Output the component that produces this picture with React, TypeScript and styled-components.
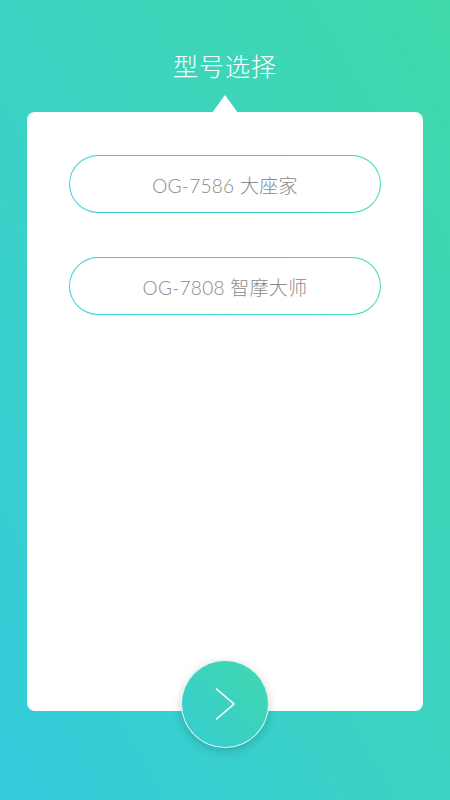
import React from 'react';
import styled, { createGlobalStyle } from 'styled-components';

const GlobalStyle = createGlobalStyle`
    html, body {
        margin: 0;
        padding: 0;
    }
    body {
        font-family: "Noto Sans", "Noto Sans CJK SC", sans-serif;
    }
`;

const Page = styled.div`
    box-sizing: border-box;
    width: 450px;
    height: 800px;
    padding: 48px 27px 0;
    background: linear-gradient(to top right, #33cbdc 0%, #3bd3c2 50%, #40d9aa 100%);
    display: flex;
    flex-direction: column;
    overflow: hidden;
`;

const Title = styled.h1`
    margin: 0 0 30px;
    font-family: "Noto Sans CJK SC", sans-serif;
    font-size: 25px;
    line-height: 34px;
    font-weight: 300;
    color: #ffffff;
    text-align: center;
    letter-spacing: 1px;
`;

const Card = styled.div`
    position: relative;
    box-sizing: border-box;
    height: 599px;
    background: #ffffff;
    border-radius: 8px;
    padding: 43px 42px 0;
    display: flex;
    flex-direction: column;
    gap: 44px;

    &::before {
        content: "";
        position: absolute;
        top: -17px;
        left: 50%;
        margin-left: -13px;
        border-left: 13px solid transparent;
        border-right: 13px solid transparent;
        border-bottom: 18px solid #ffffff;
    }
`;

const ModelButton = styled.button<{ $selected?: boolean }>`
    box-sizing: border-box;
    height: 58px;
    width: 100%;
    border: 1px solid transparent;
    border-radius: 29px;
    background:
        linear-gradient(#ffffff, #ffffff) padding-box,
        linear-gradient(to right, #38cedb, #3fd8b4) border-box;
    font-family: "Lato", "Noto Sans CJK SC", sans-serif;
    font-size: 19px;
    font-weight: 300;
    letter-spacing: 0.3px;
    color: ${p => (p.$selected ? '#3bd3c2' : '#8a8a8a')};
    cursor: pointer;
`;

const NextButton = styled.button`
    position: absolute;
    left: 50%;
    bottom: -37px;
    margin-left: -44px;
    width: 88px;
    height: 88px;
    border-radius: 50%;
    border: 1px solid rgba(255, 255, 255, 0.8);
    background: linear-gradient(to bottom left, #40d9ae, #36cbd2);
    box-shadow: 0 3px 10px rgba(0, 0, 0, 0.18);
    display: flex;
    align-items: center;
    justify-content: center;
    padding: 0;
    cursor: pointer;
`;

const models = ['OG-7586 大座家', 'OG-7808 智摩大师'];

const App = () => {
    return (
        <Page>
            <GlobalStyle />
            <Title>型号选择</Title>
            <Card>
                {models.map(m => (
                    <ModelButton key={m}>{m}</ModelButton>
                ))}
                <NextButton aria-label="下一步">
                    <svg width="22" height="34" viewBox="0 0 22 34" fill="none">
                        <path d="M2 1.5 L20 17 L2 32.5" stroke="#ffffff" strokeWidth="1.6" strokeLinejoin="miter" />
                    </svg>
                </NextButton>
            </Card>
        </Page>
    );
}

export default App;
